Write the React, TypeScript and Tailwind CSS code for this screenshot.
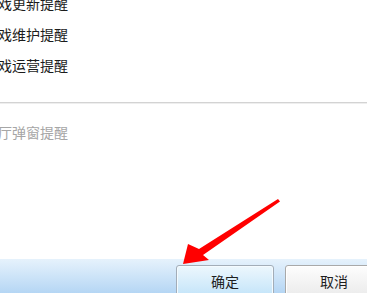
export default function App() {
  return (
    <div className="relative w-[367px] h-[293px] overflow-hidden bg-white font-['Noto_Sans_CJK_SC',sans-serif]">
      <div className="flex flex-col h-full">
        {/* options list, clipped at the left edge */}
        <div className="flex flex-col -mt-[12px] -ml-[16px] text-[14px] text-[#1c1c1c]">
          <div className="h-[31px] leading-[31px] whitespace-nowrap">游戏更新提醒</div>
          <div className="h-[31px] leading-[31px] whitespace-nowrap">游戏维护提醒</div>
          <div className="h-[31px] leading-[31px] whitespace-nowrap">游戏运营提醒</div>
        </div>

        <div className="mt-[21px] h-[2px] border-t border-[#d3d3d3] bg-[#eeeeee]" />

        <div className="mt-[13px] -ml-[16px] h-[31px] leading-[31px] whitespace-nowrap text-[14px] text-[#a6a6a6]">
          大厅弹窗提醒
        </div>

        {/* bottom button bar */}
        <div className="mt-auto h-[34px] overflow-hidden bg-gradient-to-b from-[#e6f2fc] to-[#b5d6f4] flex items-start pt-[6px] pl-[176px] gap-[11px]">
          <button className="shrink-0 w-[98px] h-[32px] flex items-center justify-center rounded-[3px] border border-[#a3adb8] bg-gradient-to-b from-[#edf7fd] to-[#c3e4f9] shadow-[inset_0_0_0_1px_#f4fbff] text-[14px] text-[#1e1e1e]">
            确定
          </button>
          <button className="shrink-0 w-[98px] h-[32px] flex items-center justify-center rounded-[3px] border border-[#a9a9a9] bg-gradient-to-b from-[#fdfdfd] to-[#ebebeb] shadow-[inset_0_0_0_1px_#ffffff] text-[14px] text-[#1e1e1e]">
            取消
          </button>
        </div>
      </div>

      {/* red annotation arrow */}
      <svg className="absolute inset-0 pointer-events-none" width="367" height="293" viewBox="0 0 367 293">
        <polygon
          points="183,264 188,244 199,249 278,199 280,201.5 203,255 209,260"
          fill="#ff0000"
        />
      </svg>
    </div>
  );
}
